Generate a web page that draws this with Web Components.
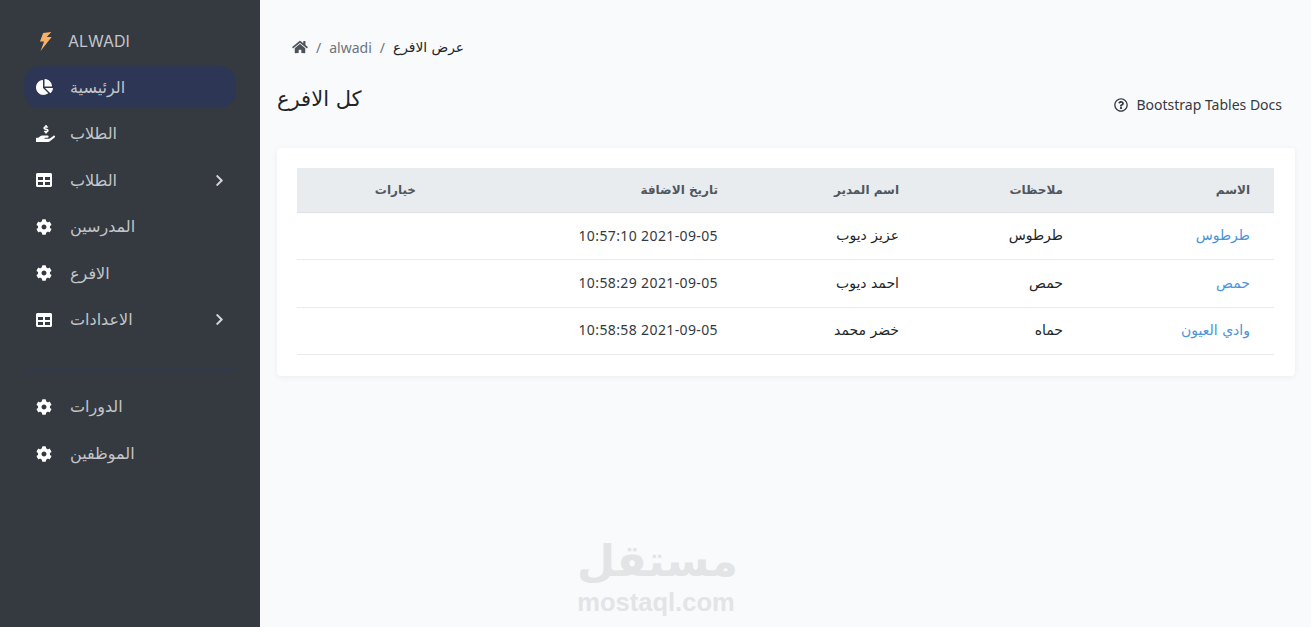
<!DOCTYPE html>
<html lang="ar">
<head>
<meta charset="utf-8">
<title>ALWADI</title>
<style>
  html, body { margin: 0; height: 100%; background: #f9fafc; overflow: hidden; }
</style>
</head>
<body>
<app-shell>
  <side-bar slot="side">
    <nav-item icon="pie" active>الرئيسية</nav-item>
    <nav-item icon="hand">الطلاب</nav-item>
    <nav-item icon="table" arrow>الطلاب</nav-item>
    <nav-item icon="cog">المدرسين</nav-item>
    <nav-item icon="cog">الافرع</nav-item>
    <nav-item icon="table" arrow>الاعدادات</nav-item>
    <side-divider></side-divider>
    <nav-item icon="cog">الدورات</nav-item>
    <nav-item icon="cog">الموظفين</nav-item>
  </side-bar>
  <bread-crumb>
    <span>alwadi</span>
    <span slot="current">عرض الافرع</span>
  </bread-crumb>
  <page-head>
    <span>كل الافرع</span>
    <span slot="action">Bootstrap Tables Docs</span>
  </page-head>
  <branch-table></branch-table>
  <water-mark></water-mark>
</app-shell>

<script>
// font awesome shapes used around the page
const ICONS = {
  pie: ["0 0 544 512", "M527.79 288H290.5l158.03 158.03c6.04 6.04 15.98 6.53 22.19.68 38.7-36.46 65.32-85.61 73.13-140.86 1.34-9.46-6.51-17.85-16.06-17.85zm-15.83-64.8C503.72 103.74 408.26 8.28 288.8.04 279.68-.59 272 7.1 272 16.24V240h223.77c9.14 0 16.82-7.68 16.19-16.8zM224 288V50.71c0-9.55-8.39-17.4-17.84-16.06C86.99 51.49-4.1 155.6.14 280.37 4.5 408.51 114.83 513.59 243.03 511.98c50.4-.63 96.97-16.87 135.26-44.03 7.9-5.6 8.42-17.23 1.57-24.08L224 288z"],
  hand: ["0 0 576 512", "M271.06,144.3l54.27,14.3a8.59,8.59,0,0,1,6.63,8.1c0,4.6-4.09,8.4-9.12,8.4h-35.6a30,30,0,0,1-11.19-2.2c-5.24-2.2-11.28-1.7-15.3,2l-19,17.5a11.68,11.68,0,0,0-2.25,2.66,11.42,11.42,0,0,0,3.88,15.74,83.77,83.77,0,0,0,34.51,11.5V240c0,8.8,7.83,16,17.37,16h17.37c9.55,0,17.38-7.2,17.38-16V222.4c32.93-3.6,57.84-31,53.5-63-3.15-23-22.46-41.3-46.56-47.7L282.68,97.4a8.59,8.59,0,0,1-6.63-8.1c0-4.6,4.09-8.4,9.12-8.4h35.6A30,30,0,0,1,332,83.1c5.23,2.2,11.28,1.7,15.3-2l19-17.5A11.31,11.31,0,0,0,368.47,61a11.43,11.43,0,0,0-3.84-15.78,83.82,83.82,0,0,0-34.52-11.5V16c0-8.8-7.82-16-17.37-16H295.37C285.82,0,278,7.2,278,16V33.6c-32.89,3.6-57.85,31-53.51,63C227.63,119.6,247,137.9,271.06,144.3ZM565.27,328.1c-11.8-10.7-30.2-10-42.6,0L430.27,402a63.64,63.64,0,0,1-40,14H272a16,16,0,0,1,0-32h78.29c15.9,0,30.71-10.9,33.25-26.6a31.2,31.2,0,0,0,.46-5.46A32,32,0,0,0,352,320H192a117.66,117.66,0,0,0-74.1,26.29L71.4,384H16A16,16,0,0,0,0,400v96a16,16,0,0,0,16,16H372.77a64,64,0,0,0,40-14L564,377a32,32,0,0,0,1.28-48.9Z"],
  table: ["0 0 512 512", "M464 32H48C21.49 32 0 53.49 0 80v352c0 26.51 21.49 48 48 48h416c26.51 0 48-21.49 48-48V80c0-26.51-21.49-48-48-48zM224 416H64v-96h160v96zm0-160H64v-96h160v96zm224 160H288v-96h160v96zm0-160H288v-96h160v96z"],
  cog: ["0 0 512 512", "M487.4 315.7l-42.6-24.6c4.3-23.2 4.3-47 0-70.2l42.6-24.6c4.9-2.8 7.1-8.6 5.5-14-11.1-35.6-30-67.8-54.7-94.6-3.8-4.1-10-5.1-14.8-2.3L380.8 110c-17.9-15.4-38.5-27.3-60.8-35.1V25.8c0-5.6-3.9-10.5-9.4-11.7-36.7-8.2-74.3-7.8-109.2 0-5.5 1.2-9.4 6.1-9.4 11.7V75c-22.2 7.9-42.8 19.8-60.8 35.1L88.7 85.5c-4.9-2.8-11-1.9-14.8 2.3-24.7 26.7-43.6 58.9-54.7 94.6-1.7 5.4.6 11.2 5.5 14L67.3 221c-4.3 23.2-4.3 47 0 70.2l-42.6 24.6c-4.9 2.8-7.1 8.6-5.5 14 11.1 35.6 30 67.8 54.7 94.6 3.8 4.1 10 5.1 14.8 2.3l42.6-24.6c17.9 15.4 38.5 27.3 60.8 35.1v49.2c0 5.6 3.9 10.5 9.4 11.7 36.7 8.2 74.3 7.8 109.2 0 5.5-1.2 9.4-6.1 9.4-11.7v-49.2c22.2-7.9 42.8-19.8 60.8-35.1l42.6 24.6c4.9 2.8 11 1.9 14.8-2.3 24.7-26.7 43.6-58.9 54.7-94.6 1.5-5.5-.7-11.3-5.6-14.1zM256 336c-44.1 0-80-35.9-80-80s35.9-80 80-80 80 35.9 80 80-35.9 80-80 80z"],
  // thin slanted bolt, the brand one is not the usual fa shape
  bolt: ["0 0 130 200", "M127 0 L40 10 L7 100 L50 100 L13 200 L130 52 L78 52 Z"],
  chevron: ["0 0 320 512", "M285.476 272.971L91.132 467.314c-9.373 9.373-24.569 9.373-33.941 0l-22.667-22.667c-9.357-9.357-9.375-24.522-.04-33.901L188.505 256 34.484 101.255c-9.335-9.379-9.317-24.544.04-33.901l22.667-22.667c9.373-9.373 24.569-9.373 33.941 0L285.475 239.03c9.373 9.372 9.373 24.568.001 33.941z"],
  home: ["0 0 576 512", "M280.37 148.26L96 300.11V464a16 16 0 0 0 16 16l112.06-.29a16 16 0 0 0 15.92-16V368a16 16 0 0 1 16-16h64a16 16 0 0 1 16 16v95.64a16 16 0 0 0 16 16.05L464 480a16 16 0 0 0 16-16V300L295.67 148.26a12.19 12.19 0 0 0-15.3 0zM571.6 251.47L488 182.56V44.05a12 12 0 0 0-12-12h-56a12 12 0 0 0-12 12v72.61L318.47 43a48 48 0 0 0-61 0L4.34 251.47a12 12 0 0 0-1.6 16.9l25.5 31A12 12 0 0 0 45.15 301l235.22-193.74a12.19 12.19 0 0 1 15.3 0L530.9 301a12 12 0 0 0 16.9-1.6l25.5-31a12 12 0 0 0-1.7-16.93z"],
  question: ["0 0 512 512", "M256 8C119.043 8 8 119.083 8 256c0 136.997 111.043 248 248 248s248-111.003 248-248C504 119.083 392.957 8 256 8zm0 448c-110.532 0-200-89.431-200-200 0-110.495 89.472-200 200-200 110.491 0 200 89.471 200 200 0 110.53-89.431 200-200 200zm107.244-255.2c0 67.052-72.421 68.084-72.421 92.863V300c0 6.627-5.373 12-12 12h-45.647c-6.627 0-12-5.373-12-12v-8.659c0-35.745 27.1-50.034 47.579-61.516 17.561-9.845 28.324-16.541 28.324-29.579 0-17.246-21.999-28.693-39.784-28.693-23.189 0-33.894 10.977-48.942 29.969-4.057 5.12-11.46 6.071-16.666 2.124l-27.824-21.098c-5.107-3.872-6.251-11.066-2.644-16.363C184.846 131.491 214.94 112 261.794 112c49.071 0 101.45 38.304 101.45 88.8zM298 368c0 23.159-18.841 42-42 42s-42-18.841-42-42 18.841-42 42-42 42 18.841 42 42z"]
};

function icon(name, width, height, color) {
  const [box, d] = ICONS[name];
  return `<svg viewBox="${box}" width="${width}" height="${height}" fill="${color}" aria-hidden="true"><path d="${d}"/></svg>`;
}

const FONT = `"Noto Sans", "DejaVu Sans", sans-serif`;

class AppShell extends HTMLElement {
  constructor() {
    super();
    this.attachShadow({ mode: "open" });
    this.shadowRoot.innerHTML = `
      <style>
        :host { display: grid; grid-template-columns: 260px 1fr; height: 627px; font-family: ${FONT}; color: #212529; }
        main { position: relative; display: flex; flex-direction: column; padding: 0 16px 0 17px; min-width: 0; }
      </style>
      <slot name="side"></slot>
      <main><slot></slot></main>
    `;
  }
}

class SideBar extends HTMLElement {
  constructor() {
    super();
    this.attachShadow({ mode: "open" });
    this.shadowRoot.innerHTML = `
      <style>
        :host { display: block; background: #343a40; height: 627px; padding: 20px 24px 0; box-sizing: border-box; }
        .brand { display: flex; align-items: center; height: 42px; padding-left: 15px; gap: 16px; margin-bottom: 4px;
                 font: 400 16px "Inter", sans-serif; color: #c3c6ca; }
        .brand svg { display: block; }
      </style>
      <div class="brand">${icon("bolt", 13, 19, "#f6b26b")}<span>ALWADI</span></div>
      <slot></slot>
    `;
  }
}

class NavItem extends HTMLElement {
  constructor() {
    super();
    this.attachShadow({ mode: "open" });
    const name = this.getAttribute("icon");
    const size = name === "hand" ? [19, 17] : name === "pie" ? [17, 16] : [16, 16];
    this.shadowRoot.innerHTML = `
      <style>
        :host { display: flex; align-items: center; height: 42px; margin-bottom: 4.6px; padding: 0 12px;
                border-radius: 16px; color: #c3c6ca; font: 16px "DejaVu Sans", sans-serif; }
        :host([active]) { background: #2d3654; }
        .ico { display: flex; width: 34px; flex: none; }
        .label { flex: 1; }
        .arrow { display: flex; }
      </style>
      <span class="ico">${icon(name, size[0], size[1], "#fff")}</span>
      <span class="label"><slot></slot></span>
      ${this.hasAttribute("arrow") ? `<span class="arrow">${icon("chevron", 9, 13, "#d3d5d8")}</span>` : ""}
    `;
  }
}

class SideDivider extends HTMLElement {
  constructor() {
    super();
    this.attachShadow({ mode: "open" }).innerHTML = `
      <style>:host { display: block; height: 1px; background: #2f3850; margin: 29px 0 15px; }</style>
    `;
  }
}

class BreadCrumb extends HTMLElement {
  constructor() {
    super();
    this.attachShadow({ mode: "open" });
    this.shadowRoot.innerHTML = `
      <style>
        :host { display: flex; align-items: center; height: 20px; margin-top: 37px; padding-left: 15px; font-size: 14px; color: #6c757d; }
        .sep { color: #6c757d; margin: 0 8px; }
        .cur { color: #212529; font: 13.8px "DejaVu Sans", sans-serif; }
        svg { display: block; }
      </style>
      ${icon("home", 16, 14, "#4d5359")}
      <span class="sep">/</span>
      <slot></slot>
      <span class="sep">/</span>
      <span class="cur"><slot name="current"></slot></span>
    `;
  }
}

class PageHead extends HTMLElement {
  constructor() {
    super();
    this.attachShadow({ mode: "open" });
    this.shadowRoot.innerHTML = `
      <style>
        :host { display: flex; justify-content: space-between; align-items: flex-start; height: 91px; padding-top: 30px; box-sizing: border-box; }
        h2 { margin: 0; font: 400 21px/24px "DejaVu Sans", sans-serif; color: #212529; }
        .act { display: flex; align-items: center; gap: 8px; margin: 8px 13px 0 0; font-size: 14px; line-height: 20px; color: #343a40; }
        svg { display: block; }
      </style>
      <h2><slot></slot></h2>
      <div class="act">${icon("question", 14, 14, "#343a40")}<slot name="action"></slot></div>
    `;
  }
}

class BranchTable extends HTMLElement {
  constructor() {
    super();
    this.attachShadow({ mode: "open" });
    const rows = [
      ["طرطوس", "طرطوس", "عزيز ديوب", "2021-09-05 10:57:10"],
      ["حمص", "حمص", "احمد ديوب", "2021-09-05 10:58:29"],
      ["وادي العيون", "حماه", "خضر محمد", "2021-09-05 10:58:58"]
    ];
    this.shadowRoot.innerHTML = `
      <style>
        :host { display: block; background: #fff; border-radius: 4px; padding: 20px 21px 21px 20px;
                box-shadow: 0 1px 6px rgba(0, 0, 0, .06); }
        table { width: 100%; border-collapse: collapse; table-layout: fixed; font: 14px "DejaVu Sans", sans-serif; }
        th { height: 44px; padding: 0 24px; text-align: right; font-size: 12px; font-weight: 700; color: #50575e;
             background: #e9ecef; border-bottom: 1px solid #dee2e6; }
        td { height: 47.4px; padding: 0 24px 2px; box-sizing: border-box; text-align: right; color: #212529; border-bottom: 1px solid #e9ecef; }
        td.date { font: 14px ${FONT}; letter-spacing: .38px; color: #343a40; }
        a { color: #4a94d8; text-decoration: none; }
      </style>
      <table dir="rtl">
        <colgroup><col style="width:187px"><col style="width:164px"><col style="width:181px"><col style="width:302px"><col></colgroup>
        <thead><tr><th>الاسم</th><th>ملاحظات</th><th>اسم المدير</th><th>تاريخ الاضافة</th><th>خيارات</th></tr></thead>
        <tbody>
          ${rows.map(r => `<tr><td><a href="#">${r[0]}</a></td><td>${r[1]}</td><td>${r[2]}</td><td class="date">${r[3]}</td><td></td></tr>`).join("")}
        </tbody>
      </table>
    `;
  }
}

class WaterMark extends HTMLElement {
  constructor() {
    super();
    this.attachShadow({ mode: "open" });
    this.shadowRoot.innerHTML = `
      <style>
        :host { position: absolute; left: 317px; top: 535px; width: 158px; text-align: center; color: #e3e4e6; pointer-events: none; }
        .ar { font: 700 44px/52px "DejaVu Sans", sans-serif; }
        .en { font: 700 25.5px/30px "Liberation Sans", sans-serif; }
      </style>
      <div class="ar">مستقل</div>
      <div class="en">mostaql.com</div>
    `;
  }
}

customElements.define("app-shell", AppShell);
customElements.define("side-bar", SideBar);
customElements.define("nav-item", NavItem);
customElements.define("side-divider", SideDivider);
customElements.define("bread-crumb", BreadCrumb);
customElements.define("page-head", PageHead);
customElements.define("branch-table", BranchTable);
customElements.define("water-mark", WaterMark);
</script>
</body>
</html>
